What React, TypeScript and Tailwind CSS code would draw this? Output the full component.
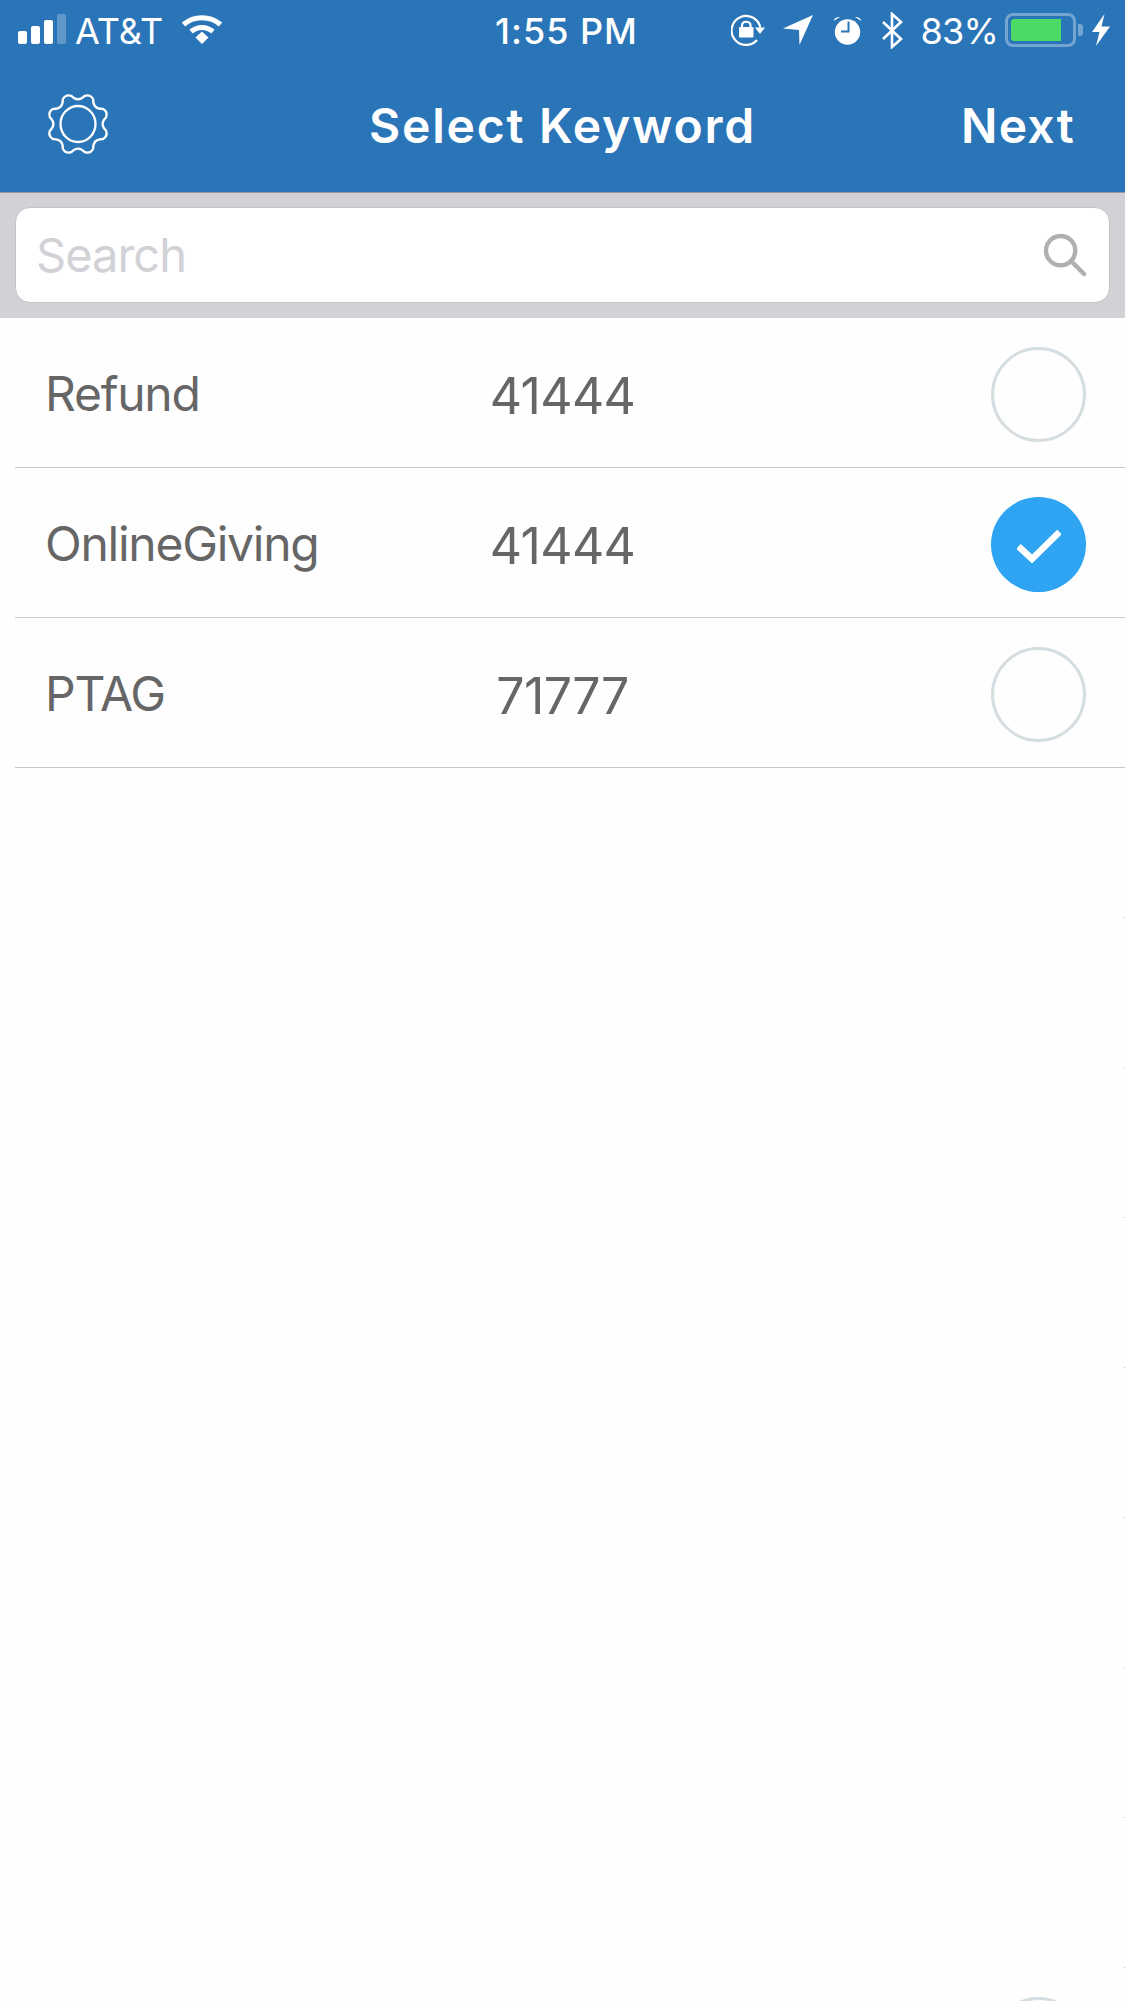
const keywords = [
  { name: 'Refund', code: '41444', selected: false },
  { name: 'OnlineGiving', code: '41444', selected: true },
  { name: 'PTAG', code: '71777', selected: false },
];

// scalloped outline of the settings gear, 8 teeth
function gearPath() {
  const cx = 32;
  const cy = 32;
  const at = (deg: number, r: number) => {
    const a = (deg * Math.PI) / 180;
    return `${(cx + r * Math.cos(a)).toFixed(2)} ${(cy + r * Math.sin(a)).toFixed(2)}`;
  };
  let d = '';
  for (let k = 0; k < 8; k++) {
    const tip = 22.5 + 45 * k;
    d += k === 0 ? `M${at(tip - 9, 29)}` : '';
    d += `Q${at(tip, 32.5)} ${at(tip + 9, 29)}`;
    d += `Q${at(tip + 22.5, 21)} ${at(tip + 36, 29)}`;
  }
  return d + 'Z';
}

function GearIcon() {
  return (
    <svg width="64" height="64" viewBox="0 0 64 64" fill="none" stroke="white" strokeWidth="2.3">
      <path d={gearPath()} strokeLinejoin="round" />
      <ellipse cx="32" cy="32" rx="17.5" ry="18" />
    </svg>
  );
}

function SignalBars() {
  return (
    <div className="flex items-end gap-[4px] h-[30px] mb-[2px]">
      <div className="w-[9px] h-[13px] rounded-[2px] bg-white" />
      <div className="w-[9px] h-[18px] rounded-[2px] bg-white" />
      <div className="w-[9px] h-[24px] rounded-[2px] bg-white" />
      <div className="w-[9px] h-[30px] rounded-[2px] bg-white/25" />
    </div>
  );
}

function WifiIcon() {
  return (
    <svg width="42" height="30" viewBox="0 0 42 30" fill="none" stroke="white" strokeWidth="5">
      <path d="M2.5 9.5C13 0.5 29 0.5 39.5 9.5" />
      <path d="M10 16.5C16.5 11 25.5 11 32 16.5" />
      <path d="M14.5 22.5L21 16.5L27.5 22.5L21 29Z" fill="white" stroke="none" />
    </svg>
  );
}

function RotationLockIcon() {
  return (
    <svg width="34" height="32" viewBox="0 0 34 32" fill="none" stroke="white">
      <path d="M26 26A14.5 14.5 0 1 1 29.3 13.5" strokeWidth="2.2" />
      <path d="M24 13.5H34L29 20Z" fill="white" stroke="none" />
      <rect x="8" y="13" width="14.5" height="10.5" rx="1" fill="white" stroke="none" />
      <path d="M11 14V11.5C11 6.5 19.5 6.5 19.5 11.5V14" strokeWidth="2.2" />
    </svg>
  );
}

function LocationIcon() {
  return (
    <svg width="30" height="30" viewBox="0 0 30 30" fill="white">
      <path d="M30 0L0 13.5L16 15L16.5 30Z" />
    </svg>
  );
}

function AlarmIcon() {
  return (
    <svg width="29" height="29" viewBox="0 0 29 29">
      <circle cx="14.5" cy="16" r="12.7" fill="white" />
      <path d="M0.5 5Q2 0.5 7 1Z" fill="white" />
      <path d="M28.5 5Q27 0.5 22 1Z" fill="white" />
      <path d="M15.5 5.5V15.5H8" fill="none" stroke="#2a74b8" strokeWidth="2" />
    </svg>
  );
}

function BluetoothIcon() {
  return (
    <svg width="21" height="37" viewBox="0 0 21 37" fill="none" stroke="white" strokeWidth="2.6">
      <path d="M1 10L19 27L10 35V2L19 10L1 27" />
    </svg>
  );
}

function BatteryIcon() {
  return (
    <div className="flex items-center gap-[2px]">
      <div className="w-[71px] h-[34px] rounded-[8px] border-[3px] border-white/35 p-[3px] flex">
        <div className="w-[50px] h-full rounded-l-[3px] bg-[#4cd964]" />
      </div>
      <div className="w-[5px] h-[12px] rounded-r-[3px] bg-white/35" />
    </div>
  );
}

function BoltIcon() {
  return (
    <svg width="18" height="32" viewBox="0 0 18 32" fill="white">
      <path d="M12.5 0L0 18H7.5L4 32L18 12.5H9.5Z" />
    </svg>
  );
}

function StatusBar() {
  return (
    <div className="h-[60px] grid grid-cols-[1fr_auto_1fr] items-center text-white text-[36px] leading-none">
      <div className="flex items-center pl-[18px]">
        <SignalBars />
        <span className="ml-[9px] pt-[2px]">AT&amp;T</span>
        <div className="ml-[18px]">
          <WifiIcon />
        </div>
      </div>
      <span className="pl-[8px] pt-[2px] font-medium tracking-[1px]">1:55 PM</span>
      <div className="flex items-center justify-end pr-[15px]">
        <RotationLockIcon />
        <div className="ml-[18px]">
          <LocationIcon />
        </div>
        <div className="ml-[20px]">
          <AlarmIcon />
        </div>
        <div className="ml-[20px]">
          <BluetoothIcon />
        </div>
        <span className="ml-[18px] pt-[2px] tracking-[-0.8px]">83%</span>
        <div className="ml-[7px]">
          <BatteryIcon />
        </div>
        <div className="ml-[9px]">
          <BoltIcon />
        </div>
      </div>
    </div>
  );
}

function Header() {
  return (
    <header className="h-[193px] bg-[#2a74b8] border-b border-[#8f9aa6]">
      <StatusBar />
      <div className="h-[132px] grid grid-cols-[1fr_auto_1fr] items-center text-white text-[48px] font-semibold leading-none">
        <div className="pl-[46px] pb-[4px]">
          <GearIcon />
        </div>
        <h1 className="font-semibold tracking-[1.8px]">Select Keyword</h1>
        <div className="pr-[50px] text-right tracking-[1.3px]">Next</div>
      </div>
    </header>
  );
}

function SearchBar() {
  return (
    <div className="h-[125px] bg-[#d1d1d6] px-[15px] pt-[14px]">
      <div className="h-[96px] rounded-[15px] bg-white border border-[#c4c4c8] flex items-center justify-between pl-[20px] pr-[22px]">
        <span className="pb-[2px] text-[47px] leading-none tracking-[-1px] text-[#d1d1d6]">Search</span>
        <svg width="43" height="43" viewBox="0 0 44 44" fill="none" stroke="#b0b0b0" strokeWidth="4.5">
          <circle cx="17" cy="17" r="15" />
          <path d="M27.5 27.5L41 41" strokeLinecap="round" />
        </svg>
      </div>
    </div>
  );
}

function RadioMark({ selected }: { selected: boolean }) {
  if (selected) {
    return (
      <div className="w-[95px] h-[95px] rounded-full bg-[#2ea4f3] flex items-center justify-center pt-[3px]">
        <svg width="44" height="34" viewBox="0 0 44 34" fill="none" stroke="white" strokeWidth="6.5">
          <path d="M1.5 17.5L15 30L42.5 3" />
        </svg>
      </div>
    );
  }
  return <div className="w-[95px] h-[95px] rounded-full border-[3px] border-[#d5dde1]" />;
}

function KeywordRow({ name, code, selected }: { name: string; code: string; selected: boolean }) {
  return (
    <div className="h-[150px] ml-[15px] pl-[30px] pr-[39px] border-b border-[#c8c8c8] grid grid-cols-[1fr_auto_1fr] items-center text-[#666666] leading-none">
      <span className="pt-[2px] text-[48px] tracking-[-1.25px]">{name}</span>
      <span className="pt-[7px] mr-[6px] text-[50px] tracking-[-0.6px]">{code}</span>
      <div className="flex justify-end pt-[4px]">
        <RadioMark selected={selected} />
      </div>
    </div>
  );
}

// rows below the data: only the very end of each divider shows at the screen edge
function BlankRow() {
  return (
    <div className="h-[150px] flex justify-end items-end">
      <div className="w-[1px] h-[1px] bg-[#b8b8b8]" />
    </div>
  );
}

export default function App() {
  return (
    <div className="w-[1125px] h-[2001px] overflow-hidden bg-[#fefefe] font-['Inter','Liberation_Sans',sans-serif]">
      <Header />
      <SearchBar />
      {keywords.map((k) => (
        <KeywordRow key={k.name} name={k.name} code={k.code} selected={k.selected} />
      ))}
      {[0, 1, 2, 3, 4, 5, 6, 7].map((n) => (
        <BlankRow key={n} />
      ))}
      <div className="pt-[29px] pr-[39px] flex justify-end">
        <RadioMark selected={false} />
      </div>
    </div>
  );
}
